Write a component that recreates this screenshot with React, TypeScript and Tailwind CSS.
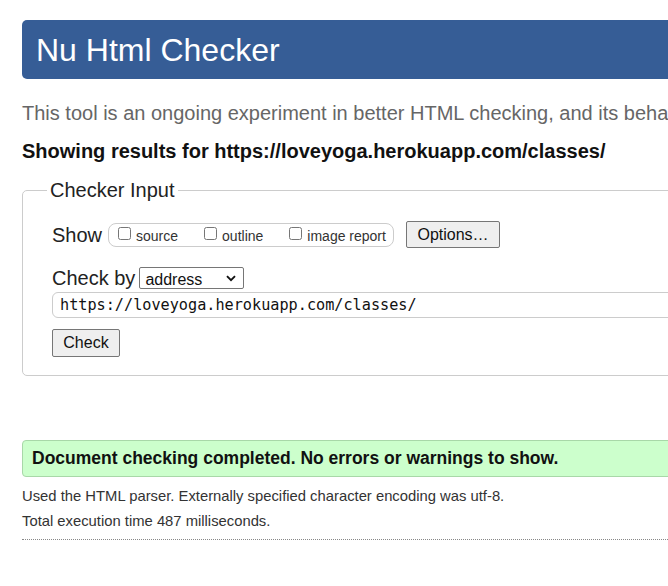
import React from "react";

export default function App() {
  return (
    <div
      className="w-[668px] h-[586px] overflow-hidden bg-white text-[#222]"
      style={{ fontFamily: '"Liberation Sans", Arial, sans-serif' }}
    >
      <div className="w-[1100px] pl-[22px] pt-[20px]">
        <header className="h-[59px] rounded-[5px] bg-[#365d96] pl-[14px] flex items-center">
          <h1 className="text-[32px] leading-none text-white">Nu Html Checker</h1>
        </header>

        <p className="mt-[22px] text-[20px] leading-[24px] text-[#666] whitespace-nowrap">
          This tool is an ongoing experiment in better HTML checking, and its behavior remains subject to change
        </p>

        <p className="mt-[14px] text-[20px] leading-[24px] font-bold text-[#111] whitespace-nowrap">
          Showing results for https://loveyoga.herokuapp.com/classes/
        </p>

        <fieldset className="mt-[15px] border border-[#cccccc] rounded-[5px] pl-[24px] pb-[18px]">
          <legend className="px-[3px] text-[20px] leading-[24px] text-[#222]">Checker Input</legend>
          <div className="pl-[5px]">
            <div className="mt-[19px] h-[27px] flex items-center">
              <span className="text-[20px] leading-[24px] text-[#222]">Show</span>
              <div className="ml-[6px] h-[24px] w-[286px] border border-[#cccccc] rounded-[8px] flex items-center pl-[9px] text-[14px] text-[#333]">
                <label className="flex items-center">
                  <input type="checkbox" className="w-[13px] h-[13px] m-0 -translate-y-[1px]" />
                  <span className="ml-[5px] leading-[16px] translate-y-[1px]">source</span>
                </label>
                <label className="flex items-center ml-[26px]">
                  <input type="checkbox" className="w-[13px] h-[13px] m-0 -translate-y-[1px]" />
                  <span className="ml-[5px] leading-[16px] translate-y-[1px]">outline</span>
                </label>
                <label className="flex items-center ml-[26px]">
                  <input type="checkbox" className="w-[13px] h-[13px] m-0 -translate-y-[1px]" />
                  <span className="ml-[5px] leading-[16px] translate-y-[1px]">image report</span>
                </label>
              </div>
              <button className="ml-[12px] h-[27px] w-[94px] bg-[#efefef] border border-[#767676] rounded-[2px] text-[16px] text-[#111] flex items-center justify-center">
                Options…
              </button>
            </div>

            <div className="mt-[18px] h-[24px] flex items-center">
              <span className="text-[20px] leading-[24px] text-[#222]">Check by</span>
              <div className="relative ml-[4px] h-[22px] w-[105px] border border-[#767676] rounded-[2px] bg-white">
                <select className="appearance-none w-full h-full pl-[5px] text-[16px] leading-[20px] text-[#111] bg-transparent outline-none">
                  <option>address</option>
                  <option>file upload</option>
                  <option>text input</option>
                </select>
                <svg
                  className="absolute right-[7px] top-[7px] pointer-events-none"
                  width="10"
                  height="7"
                  viewBox="0 0 10 7"
                >
                  <path d="M1 1.2 L5 5.2 L9 1.2" fill="none" stroke="#111" strokeWidth="1.9" />
                </svg>
              </div>
            </div>

            <div className="mt-[2px] h-[26px] border border-[#cccccc] rounded-[6px] flex items-center pl-[7px]">
              <span
                className="text-[15.2px] text-[#111] whitespace-nowrap"
                style={{ fontFamily: '"DejaVu Sans Mono", "Liberation Mono", monospace' }}
              >
                https://loveyoga.herokuapp.com/classes/
              </span>
            </div>

            <button className="mt-[11px] h-[28px] w-[68px] bg-[#efefef] border border-[#767676] rounded-[2px] text-[16px] text-[#111] flex items-center justify-center">
              Check
            </button>
          </div>
        </fieldset>

        <div className="mt-[64px] h-[37px] bg-[#ccffcc] border border-[#a8d8a8] rounded-[4px] flex items-center pl-[9px]">
          <p className="text-[17.5px] font-bold text-[#111] whitespace-nowrap">
            Document checking completed. No errors or warnings to show.
          </p>
        </div>

        <p className="mt-[10px] text-[14.8px] leading-[18px] text-[#333] whitespace-nowrap">
          Used the HTML parser. Externally specified character encoding was utf-8.
        </p>
        <p className="mt-[7px] text-[14.8px] leading-[18px] text-[#333] whitespace-nowrap">
          Total execution time 487 milliseconds.
        </p>
        <div className="mt-[9px] border-t border-dotted border-[#888]" />
      </div>
    </div>
  );
}
